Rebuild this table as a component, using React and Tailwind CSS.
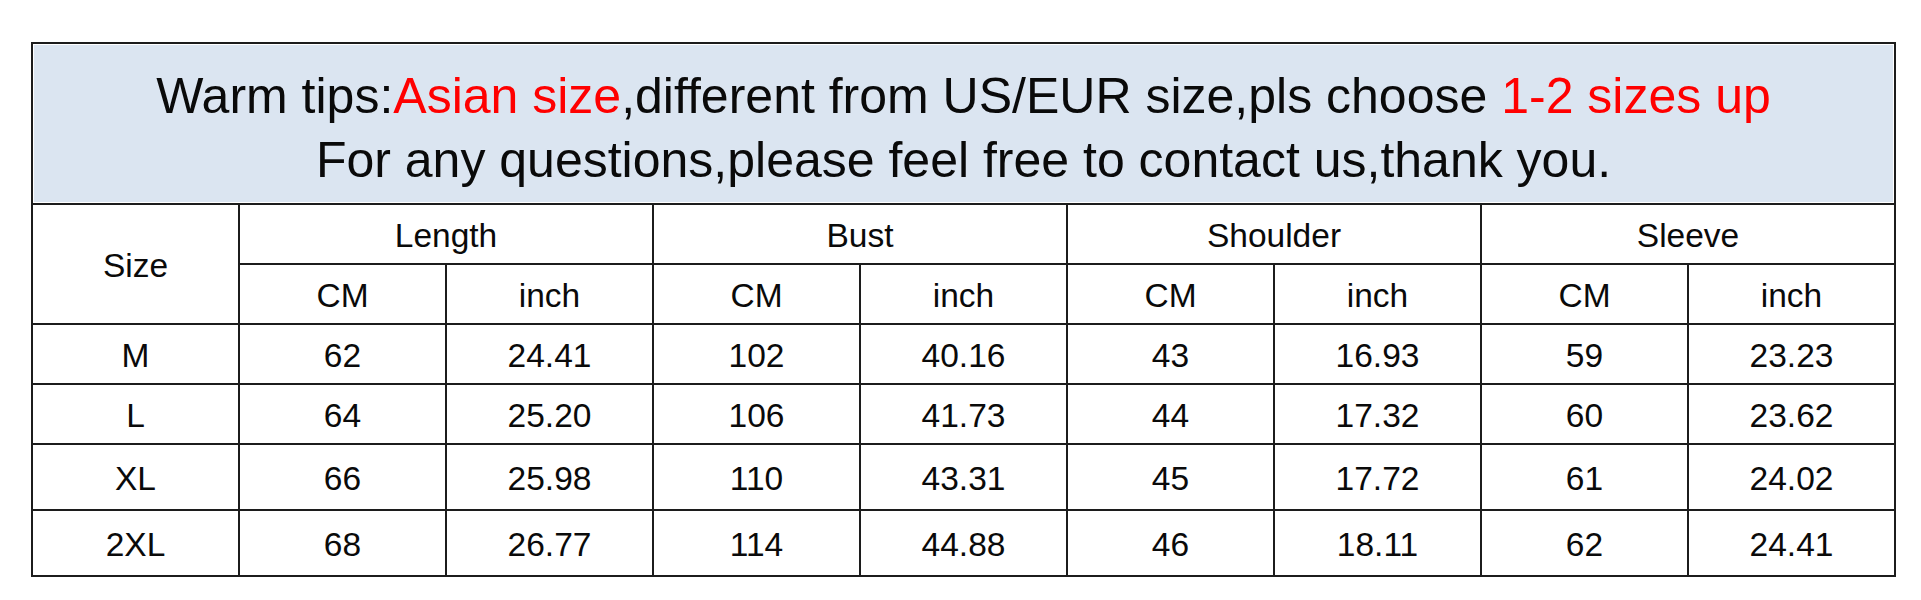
import React from "react";

const rows = [
  ["M", "62", "24.41", "102", "40.16", "43", "16.93", "59", "23.23"],
  ["L", "64", "25.20", "106", "41.73", "44", "17.32", "60", "23.62"],
  ["XL", "66", "25.98", "110", "43.31", "45", "17.72", "61", "24.02"],
  ["2XL", "68", "26.77", "114", "44.88", "46", "18.11", "62", "24.41"],
];

const groups = ["Length", "Bust", "Shoulder", "Sleeve"];

const cell = "flex items-center justify-center bg-white pt-[5px] text-[33.5px]";

export default function App() {
  return (
    <div
      className="min-h-[600px] w-[1921px] bg-white pt-[42px] pl-[31px] text-[#0a0a0a]"
      style={{ fontFamily: '"Liberation Sans", Arial, sans-serif' }}
    >
      <div className="grid w-max grid-cols-[repeat(9,205px)] grid-rows-[159px_58px_58px_58px_58px_64px_64px] gap-[2px] border-2 border-[#1c1c1c] bg-[#1c1c1c]">
        <div className="col-span-9 flex flex-col items-center bg-[#dbe5f1] pt-[20px] text-[50px] leading-[64px] shadow-[inset_0_0_0_1px_#ffffff]">
          <div className="whitespace-nowrap">
            Warm tips:<span className="text-[#ff0000]">Asian size</span>,different from US/EUR size,pls choose{" "}
            <span className="text-[#ff0000]">1-2 sizes up</span>
          </div>
          <div className="whitespace-nowrap">For any questions,please feel free to contact us,thank you.</div>
        </div>

        <div className={"row-span-2 " + cell}>Size</div>
        {groups.map((g) => (
          <div key={g} className={"col-span-2 " + cell}>
            {g}
          </div>
        ))}
        {groups.map((g) => (
          <React.Fragment key={g + "-u"}>
            <div className={cell}>CM</div>
            <div className={cell}>inch</div>
          </React.Fragment>
        ))}

        {rows.map((r) =>
          r.map((c, i) => (
            <div key={r[0] + i} className={cell}>
              {c}
            </div>
          ))
        )}
      </div>
    </div>
  );
}
